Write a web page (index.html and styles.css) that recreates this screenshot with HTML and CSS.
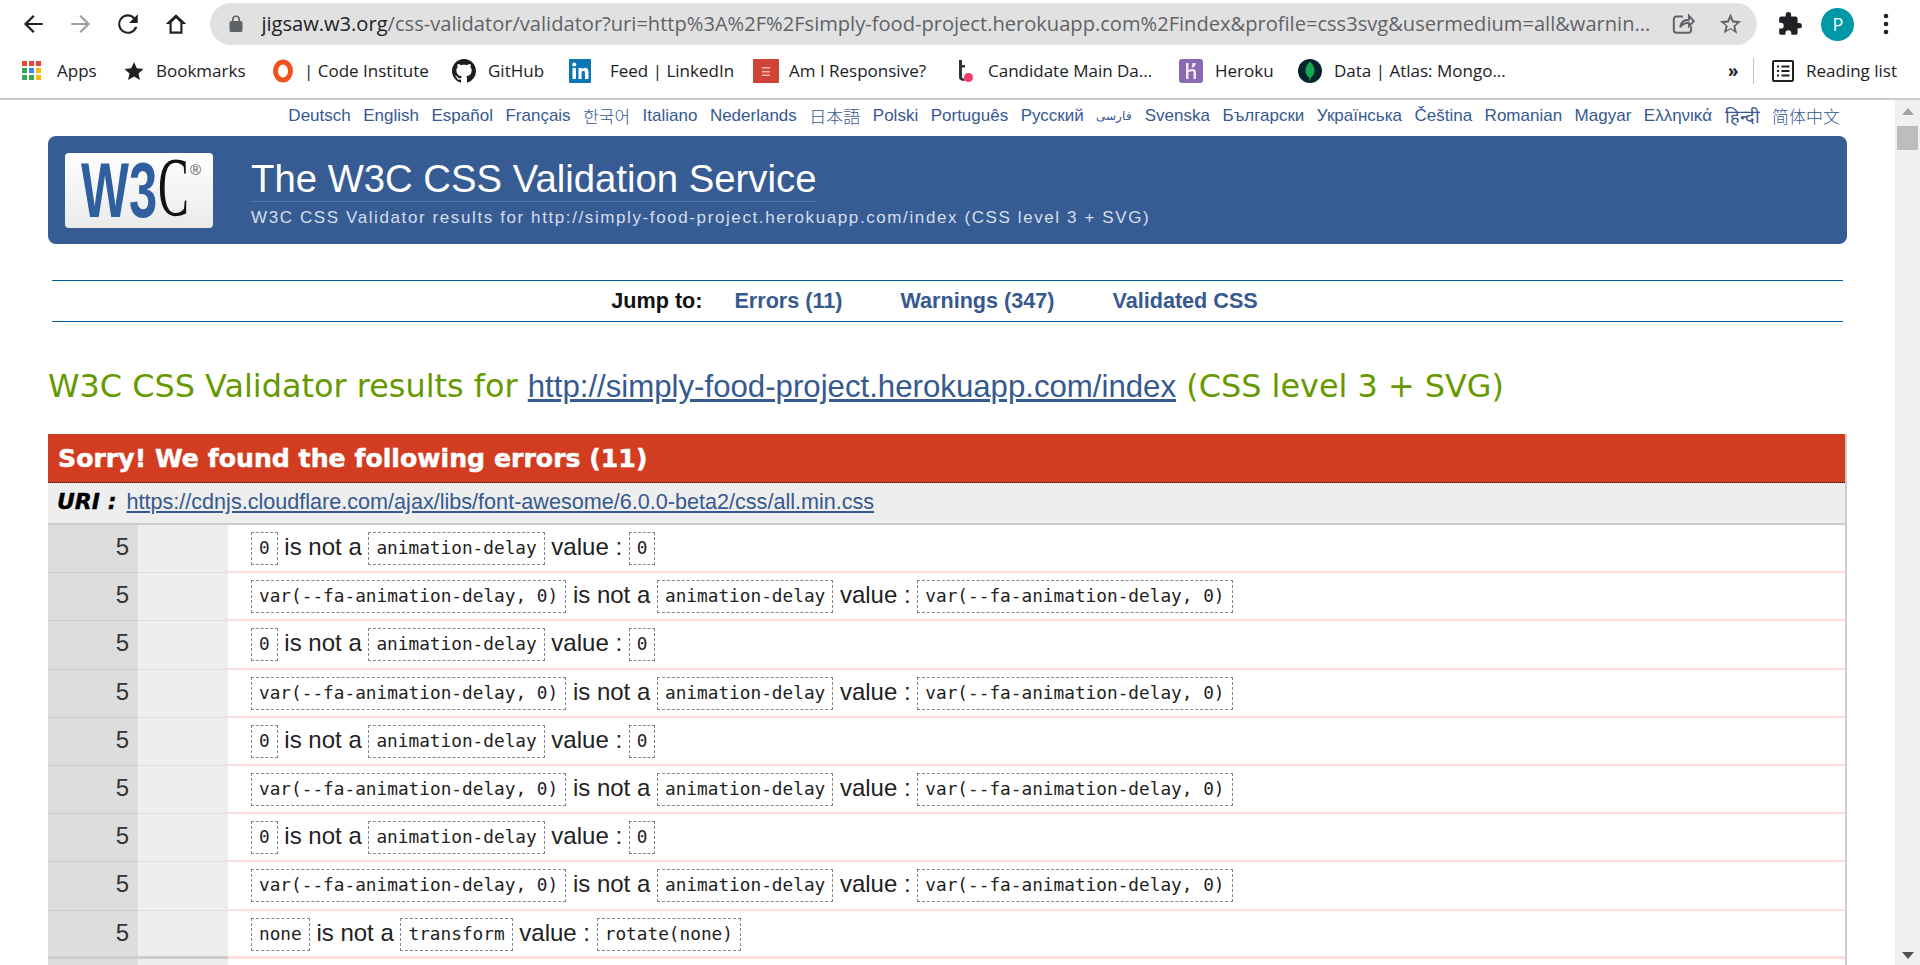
FILE: index.html
```html
<!DOCTYPE html>
<html lang="en">
<head>
  <meta charset="UTF-8" />
  <title>W3C CSS Validator results</title>
  <link rel="stylesheet" href="styles.css">
</head>
<body>
  <!-- Browser toolbar -->
  <div class="toolbar">
    <svg class="nav-icon" width="26" height="26" viewBox="0 0 24 24"><path d="M21 11H7.500l6-6L12 3.600 3.600 12l8.400 8.400 1.500-1.500-6-6H21z" fill="#202124"/></svg>
    <svg class="nav-icon" width="26" height="26" viewBox="0 0 24 24"><path d="M3 11h13.500l-6-6L12 3.600 20.400 12 12 20.400l-1.500-1.500 6-6H3z" fill="#a0a0a0"/></svg>
    <svg class="nav-icon" width="26" height="26" viewBox="0 0 24 24"><path d="M18.300 5.700A9 9 0 1 0 20.600 14.500h-2.200a7 7 0 1 1-1.600-7.300L13 11h8V3z" fill="#202124"/></svg>
    <svg class="nav-icon" width="26" height="26" viewBox="0 0 24 24"><path d="M12 3 2.500 12H6v9h12v-9h3.500zM16 19H8v-8.500l4-3.800 4 3.800z" fill="#202124"/></svg>
    <div class="omnibox">
      <svg width="14" height="18" viewBox="0 0 14 18"><path d="M12 6h-1V4.500a4 4 0 0 0-8 0V6H2a1.500 1.500 0 0 0-1.500 1.500v8A1.500 1.500 0 0 0 2 17h10a1.500 1.500 0 0 0 1.500-1.500v-8A1.500 1.500 0 0 0 12 6zM4.600 6V4.500a2.400 2.400 0 0 1 4.800 0V6z" fill="#5f6368"/></svg>
      <div class="url"><span class="host">jigsaw.w3.org</span>/css-validator/validator?uri=http%3A%2F%2Fsimply-food-project.herokuapp.com%2Findex&amp;profile=css3svg&amp;usermedium=all&amp;warnin...</div>
      <svg width="26" height="26" viewBox="0 0 24 24" fill="none" stroke="#5f6368" stroke-width="1.800"><path d="M12 5H6a2.500 2.500 0 0 0-2.500 2.500v10A2.500 2.500 0 0 0 6 20h11a2.500 2.500 0 0 0 2.500-2.500V14"/><path d="M9.500 15c.5-4.500 3.500-7 8-7V4.500L22 9.500 17.500 14v-3.200c-3.500 0-6 1.200-8 4.200z"/></svg>
      <svg class="omni-star" width="27" height="27" viewBox="0 0 24 24"><path d="M12 3l2.700 6.300 6.800.6-5.200 4.500 1.600 6.700L12 17l-5.900 3.600 1.600-6.700L2.500 9.900l6.800-.6zm0 4.600-1.600 3.600-3.900.4 3 2.600-.9 3.800 3.400-2 3.400 2-.9-3.800 3-2.600-3.900-.4z" fill="#5f6368"/></svg>
    </div>
    <svg class="ext-icon" width="26" height="26" viewBox="0 0 24 24"><path d="M20.500 11H19V7a2 2 0 0 0-2-2h-4V3.500a2.500 2.500 0 0 0-5 0V5H4a2 2 0 0 0-2 2v3.800h1.500a2.700 2.700 0 0 1 0 5.400H2V20a2 2 0 0 0 2 2h3.800v-1.500a2.700 2.700 0 0 1 5.400 0V22H17a2 2 0 0 0 2-2v-4h1.500a2.500 2.500 0 0 0 0-5z" fill="#202124"/></svg>
    <div class="avatar">P</div>
    <svg class="menu-dots" width="6" height="24" viewBox="0 0 6 24"><circle cx="3" cy="4" r="2.300"/><circle cx="3" cy="12" r="2.300"/><circle cx="3" cy="20" r="2.300"/></svg>
  </div>

  <!-- Bookmarks -->
  <div class="bookmarks">
    <div class="bm bm-apps">
      <svg width="20" height="20" viewBox="0 0 20 20">
        <rect x="0" y="0" width="5" height="5" fill="#ea4335"/><rect x="7" y="0" width="5" height="5" fill="#ea4335"/><rect x="14" y="0" width="5" height="5" fill="#ea4335"/>
        <rect x="0" y="7" width="5" height="5" fill="#34a853"/><rect x="7" y="7" width="5" height="5" fill="#4285f4"/><rect x="14" y="7" width="5" height="5" fill="#fbbc05"/>
        <rect x="0" y="14" width="5" height="5" fill="#34a853"/><rect x="7" y="14" width="5" height="5" fill="#34a853"/><rect x="14" y="14" width="5" height="5" fill="#fbbc05"/>
      </svg>
      <span>Apps</span>
    </div>
    <div class="bm bm-marks">
      <svg width="20" height="20" viewBox="0 0 20 20"><path d="M10 1l2.800 6.200 6.700.7-5 4.500 1.400 6.600-5.900-3.400-5.900 3.400 1.400-6.600-5-4.500 6.700-.7z" fill="#202124"/></svg>
      <span>Bookmarks</span>
    </div>
    <div class="bm bm-ci">
      <svg width="22" height="24" viewBox="0 0 22 24"><ellipse cx="11" cy="12" rx="7.500" ry="9" fill="none" stroke="#f0521e" stroke-width="5"/></svg>
      <span>| Code Institute</span>
    </div>
    <div class="bm bm-gh">
      <svg width="24" height="24" viewBox="0 0 16 16"><path d="M8 0C3.580 0 0 3.580 0 8c0 3.540 2.290 6.530 5.470 7.590.4.070.55-.17.55-.38 0-.19-.01-.82-.01-1.490-2.010.37-2.530-.49-2.690-.94-.09-.23-.48-.94-.82-1.130-.28-.15-.68-.52-.01-.53.63-.01 1.080.58 1.230.82.720 1.210 1.870.870 2.330.660.070-.520.280-.870.510-1.070-1.780-.2-3.640-.89-3.640-3.950 0-.870.310-1.590.820-2.150-.080-.2-.360-1.020.080-2.120 0 0 .670-.210 2.200.820.640-.180 1.320-.270 2-.270s1.360.090 2 .270c1.530-1.040 2.200-.820 2.200-.820.440 1.100.160 1.920.080 2.120.510.560.820 1.270.820 2.150 0 3.070-1.870 3.750-3.650 3.950.290.250.540.730.540 1.480 0 1.070-.010 1.930-.010 2.200 0 .210.150.460.550.380A8.010 8.010 0 0 0 16 8c0-4.420-3.580-8-8-8z" fill="#1b1f23"/></svg>
      <span>GitHub</span>
    </div>
    <div class="bm bm-in">
      <svg width="22" height="24" viewBox="0 0 22 24"><rect width="22" height="24" rx="1" fill="#0a76b4"/><rect x="3.500" y="9" width="3.500" height="11" fill="#fff"/><circle cx="5.200" cy="5.500" r="2" fill="#fff"/><path d="M9.500 9h3.300v1.600c.8-1.200 1.800-1.900 3.300-1.900 2.700 0 3.400 1.900 3.400 4.600V20h-3.500v-5.800c0-1.500-.3-2.500-1.500-2.500-1.300 0-1.900 1-1.900 2.500V20H9.500z" fill="#fff"/></svg>
      <span>Feed | LinkedIn</span>
    </div>
    <div class="bm bm-ami">
      <svg width="26" height="24" viewBox="0 0 26 24"><rect width="26" height="24" fill="#cf4436"/><rect x="9" y="8" width="8" height="1.500" fill="#eeb8b0"/><rect x="9" y="12" width="8" height="1.500" fill="#eeb8b0"/><rect x="9" y="15.500" width="8" height="1.500" fill="#eeb8b0"/></svg>
      <span>Am I Responsive?</span>
    </div>
    <div class="bm bm-t">
      <svg width="20" height="24" viewBox="0 0 20 24"><path d="M4 1h3v5h3v2.500H7v9c0 1.500.8 2 2.500 2V22C6 22 4 20.500 4 18z" fill="#333"/><circle cx="13.500" cy="18.500" r="4.500" fill="#f5386a"/></svg>
      <span>Candidate Main Da...</span>
    </div>
    <div class="bm bm-h">
      <svg width="24" height="24" viewBox="0 0 24 24"><rect width="24" height="24" rx="3" fill="#8a69b3"/><path d="M7 4h2.500v7c2-1 4-1.300 5.500-.8 1.500.6 2 1.800 2 3.300V20h-2.500v-6.300c0-1-.5-1.500-1.500-1.500-1.200 0-2.500.4-3.500.9V20H7zM13.500 4H17c-.3 1.700-1 3.100-2 4.300h-2.500c.6-1.300 1-2.700 1-4.300z" fill="#f0eaf7"/></svg>
      <span>Heroku</span>
    </div>
    <div class="bm bm-m">
      <svg width="24" height="24" viewBox="0 0 24 24"><circle cx="12" cy="12" r="12" fill="#06242b"/><path d="M12 2.500c3 3 4.500 6 4.500 9 0 3.500-2 6-3.800 7.300l-.4 3h-.6l-.4-3C9.500 17.500 7.500 15 7.500 11.500c0-3 1.500-6 4.500-9z" fill="#13aa52"/></svg>
      <span>Data | Atlas: Mongo...</span>
    </div>
    <div class="bm-more">»</div>
    <div class="bm-sep"></div>
    <div class="bm bm-read">
      <svg width="22" height="24" viewBox="0 0 22 24" fill="none" stroke="#202124" stroke-width="2"><rect x="1" y="2" width="20" height="20" rx="1"/><path d="M5 7.500h2M5 12h2M5 16.500h2M9.500 7.500h8M9.500 12h8M9.500 16.500h8"/></svg>
      <span>Reading list</span>
    </div>
  </div>

  <!-- Page viewport -->
  <div class="viewport">
    <div class="page">
      <div class="langs">
        <a>Deutsch</a><a>English</a><a>Español</a><a>Français</a><a lang="ko">한국어</a><a>Italiano</a><a>Nederlands</a><a lang="ja">日本語</a><a>Polski</a><a>Português</a><a>Русский</a><a class="lang-fa">فارسی</a><a>Svenska</a><a>Български</a><a>Українська</a><a>Čeština</a><a>Romanian</a><a>Magyar</a><a>Ελληνικά</a><a class="lang-hi">हिन्दी</a><a lang="zh">简体中文</a>
      </div>

      <div class="banner">
        <div class="logo">
          <svg class="logo-mark" width="148" height="75" viewBox="0 0 148 75">
            <text transform="translate(16,64) scale(.66,1)" class="logo-w3">W3</text>
            <text transform="translate(93,63) scale(.55,1)" class="logo-c">C</text>
            <text x="125" y="22" class="logo-r">®</text>
          </svg>
        </div>
        <div class="banner-text">
          <h1>The W3C CSS Validation Service</h1>
          <p>W3C CSS Validator results for http://simply-food-project.herokuapp.com/index (CSS level 3 + SVG)</p>
        </div>
      </div>

      <div class="jump">
        <strong>Jump to:</strong>
        <a>Errors (11)</a>
        <a>Warnings (347)</a>
        <a>Validated CSS</a>
      </div>

      <h2 class="results">W3C CSS Validator results for <a>http://simply-food-project.herokuapp.com/index</a> (CSS level 3 + SVG)</h2>

      <div class="errors">
        <h3>Sorry! We found the following errors (11)</h3>
        <div class="uri"><b>URI :</b> <a>https://cdnjs.cloudflare.com/ajax/libs/font-awesome/6.0.0-beta2/css/all.min.css</a></div>

        <div class="row"><div class="line">5</div><div class="ctx"></div><div class="msg"><code>0</code> is not a <code>animation-delay</code> value : <code>0</code></div></div>
        <div class="row"><div class="line">5</div><div class="ctx"></div><div class="msg"><code>var(--fa-animation-delay, 0)</code> is not a <code>animation-delay</code> value : <code>var(--fa-animation-delay, 0)</code></div></div>
        <div class="row"><div class="line">5</div><div class="ctx"></div><div class="msg"><code>0</code> is not a <code>animation-delay</code> value : <code>0</code></div></div>
        <div class="row"><div class="line">5</div><div class="ctx"></div><div class="msg"><code>var(--fa-animation-delay, 0)</code> is not a <code>animation-delay</code> value : <code>var(--fa-animation-delay, 0)</code></div></div>
        <div class="row"><div class="line">5</div><div class="ctx"></div><div class="msg"><code>0</code> is not a <code>animation-delay</code> value : <code>0</code></div></div>
        <div class="row"><div class="line">5</div><div class="ctx"></div><div class="msg"><code>var(--fa-animation-delay, 0)</code> is not a <code>animation-delay</code> value : <code>var(--fa-animation-delay, 0)</code></div></div>
        <div class="row"><div class="line">5</div><div class="ctx"></div><div class="msg"><code>0</code> is not a <code>animation-delay</code> value : <code>0</code></div></div>
        <div class="row"><div class="line">5</div><div class="ctx"></div><div class="msg"><code>var(--fa-animation-delay, 0)</code> is not a <code>animation-delay</code> value : <code>var(--fa-animation-delay, 0)</code></div></div>
        <div class="row row-last"><div class="line">5</div><div class="ctx"></div><div class="msg"><code>none</code> is not a <code>transform</code> value : <code>rotate(none)</code></div></div>
        <div class="row"><div class="line"></div><div class="ctx"></div><div class="msg"></div></div>
      </div>
    </div>

    <div class="scrollbar">
      <div class="arrow-up"></div>
      <div class="thumb"></div>
      <div class="arrow-down"></div>
    </div>
  </div>
</body>
</html>
```

FILE: styles.css
```css
/* Reset */
* {
  margin: 0;
  padding: 0;
  box-sizing: border-box;
}
html, body {
  width: 100%;
  height: 100%;
  overflow: hidden;
  background: #fff;
  font-family: "Liberation Sans", Arial, sans-serif;
}
body {
  display: flex;
  flex-direction: column;
}

/* Browser toolbar */
.toolbar {
  display: flex;
  align-items: center;
  height: 48px;
  padding-left: 20px;
  flex-shrink: 0;
}
.nav-icon {
  margin-right: 21.6px;
}
.omnibox {
  display: flex;
  align-items: center;
  width: 1547px;
  height: 42px;
  margin-top: -1px;
  padding: 0 13px 0 19px;
  background: #e1e1e1;
  border-radius: 21px;
}
.url {
  flex: 1;
  margin-left: 18px;
  font-family: "Open Sans", sans-serif;
  font-size: 20.100px;
  color: #5f6368;
  white-space: nowrap;
  overflow: hidden;
}
.host {
  color: #202124;
}
.omni-star {
  margin-left: 21px;
}
.ext-icon {
  margin-left: 20px;
}
.avatar {
  width: 33px;
  height: 33px;
  margin-left: 18px;
  border-radius: 50%;
  background: #0097a7;
  color: #fff;
  font-family: "Open Sans", sans-serif;
  font-size: 18px;
  line-height: 33px;
  text-align: center;
}
.menu-dots {
  margin-left: 29px;
  fill: #202124;
}

/* Bookmarks */
.bookmarks {
  display: flex;
  align-items: center;
  height: 52px;
  padding: 0 0 5px 22px;
  border-bottom: 2px solid #ccc;
  flex-shrink: 0;
  font-family: "Open Sans", sans-serif;
  font-size: 17px;
  color: #202124;
}
.bm {
  display: flex;
  align-items: center;
  gap: 12px;
  white-space: nowrap;
}
.bm-apps { width: 102px; gap: 15px; }
.bm-marks { width: 148px; }
.bm-ci { width: 180px; gap: 10px; }
.bm-gh { width: 117px; }
.bm-in { width: 184px; gap: 19px; }
.bm-ami { width: 202px; gap: 10px; }
.bm-t { width: 224px; gap: 13px; }
.bm-h { width: 119px; }
.bm-m { width: 424px; }
.bm-more {
  width: 20px;
  font-weight: bold;
  margin-left: 6px;
}
.bm-sep {
  width: 1px;
  height: 26px;
  background: #c4c4c4;
  margin: 0 18px 0 5px;
}

/* Page viewport with scrollbar */
.viewport {
  display: flex;
  flex: 1;
  min-height: 0;
}
.page {
  flex: 1;
  min-width: 0;
  overflow: hidden;
  padding: 0 48px;
}
.scrollbar {
  display: flex;
  flex-direction: column;
  align-items: center;
  width: 25px;
  background: #f0f0f0;
}
.arrow-up {
  margin-top: 8px;
  border-left: 6px solid transparent;
  border-right: 6px solid transparent;
  border-bottom: 7px solid #a3a3a3;
}
.thumb {
  width: 21px;
  height: 24px;
  margin-top: 11px;
  background: #bdbdbd;
}
.arrow-down {
  margin-top: auto;
  margin-bottom: 6px;
  border-left: 6px solid transparent;
  border-right: 6px solid transparent;
  border-top: 7px solid #505050;
}

/* Languages */
.langs {
  display: flex;
  justify-content: flex-end;
  align-items: center;
  gap: 12.500px;
  height: 36px;
  padding: 0 7px 5px 0;
  font-size: 17px;
  color: #36598f;
  white-space: nowrap;
}
.langs a:lang(ko) { font-family: "Noto Sans CJK KR", sans-serif; font-weight: 300; }
.langs a:lang(ja) { font-family: "Noto Sans CJK JP", sans-serif; font-weight: 300; }
.langs a:lang(zh) { font-family: "Noto Sans CJK SC", sans-serif; font-weight: 300; }
.lang-fa { font-size: 12px; }
.lang-hi { font-size: 18px; }

/* Banner */
.banner {
  display: flex;
  height: 108px;
  padding: 17px 0 0 17px;
  background: #375c94;
  border-radius: 8px;
  color: #fff;
}
.logo {
  width: 148px;
  height: 75px;
  background: linear-gradient(#fff, #eaeaea);
  border-radius: 4px;
}
.logo-mark {
  overflow: visible;
}
.logo-w3 {
  font-family: "Liberation Sans", sans-serif;
  font-size: 77px;
  font-weight: bold;
  fill: #2f5f9e;
}
.logo-c {
  font-family: "Liberation Serif", serif;
  font-size: 84px;
  fill: #111;
}
.logo-r {
  font-family: "Liberation Sans", sans-serif;
  font-size: 15px;
  fill: #555;
}
.banner-text {
  margin-left: 38px;
  padding-top: 4px;
}
.banner-text h1 {
  width: fit-content;
  font-size: 38.300px;
  font-weight: normal;
  line-height: 44px;
  border-bottom: 1px solid #5676a6;
  white-space: nowrap;
}
.banner-text p {
  margin-top: 6px;
  font-size: 17px;
  letter-spacing: 1.600px;
  color: #d5deeb;
  white-space: nowrap;
}

/* Jump links */
.jump {
  display: flex;
  justify-content: center;
  align-items: center;
  gap: 58px;
  height: 42px;
  margin: 36px 4px 0;
  padding-right: 26px;
  border-top: 1px solid #00609f;
  border-bottom: 1px solid #00609f;
  font-size: 21.600px;
  font-weight: bold;
  color: #36598f;
}
.jump strong {
  color: #111;
  margin-right: -26px;
}

/* Results heading */
.results {
  margin-top: 44px;
  font-size: 31.900px;
  font-weight: normal;
  font-family: "DejaVu Sans", sans-serif;
  line-height: 40px;
  color: #669900;
  white-space: nowrap;
}
.results a {
  font-family: "Liberation Sans", sans-serif;
  font-size: 31.200px;
  color: #36598f;
  text-decoration: underline;
}

/* Errors table */
.errors {
  margin-top: 27px;
  border-right: 2px solid #ccc;
}
.errors h3 {
  height: 49px;
  padding-left: 10px;
  background: #d23d22;
  border-bottom: 1px dotted #222;
  color: #fff;
  font-size: 25.200px;
  font-family: "DejaVu Sans", sans-serif;
  font-weight: bold;
  line-height: 50px;
  -webkit-text-stroke: .5px #fff;
}
.uri {
  height: 42px;
  padding-left: 9px;
  background: #eee;
  border-bottom: 2px solid #ccc;
  font-size: 21.600px;
  line-height: 38px;
}
.uri b {
  font-style: italic;
  font-family: "DejaVu Sans", sans-serif;
  font-size: 22px;
  margin-right: 4px;
  -webkit-text-stroke: .4px #000;
}
.uri a {
  color: #36598f;
  text-decoration: underline;
}
.row {
  display: grid;
  grid-template-columns: 90px 90px 1fr;
  height: 48.200px;
}
.line {
  background: #ddd;
  border-bottom: 1px solid #ccc;
  padding-right: 9px;
  text-align: right;
  font-size: 24px;
  line-height: 44px;
  color: #333;
}
.ctx {
  background: #eee;
  border-bottom: 1px solid #ddd;
}
.msg {
  padding: 7px 0 0 23px;
  border-bottom: 2px solid #fdd;
  font-size: 24px;
  line-height: 30px;
  color: #222;
  white-space: nowrap;
}
.row-last .msg {
  border-bottom-width: 3px;
}
.row-last .line,
.row-last .ctx {
  border-bottom: 3px solid #ccc;
}
code {
  display: inline-block;
  height: 33px;
  padding: 0 7px;
  border: 1px dashed #888;
  font-family: "DejaVu Sans Mono", monospace;
  font-size: 17.750px;
  line-height: 31px;
  vertical-align: top;
  color: #222;
}
```
